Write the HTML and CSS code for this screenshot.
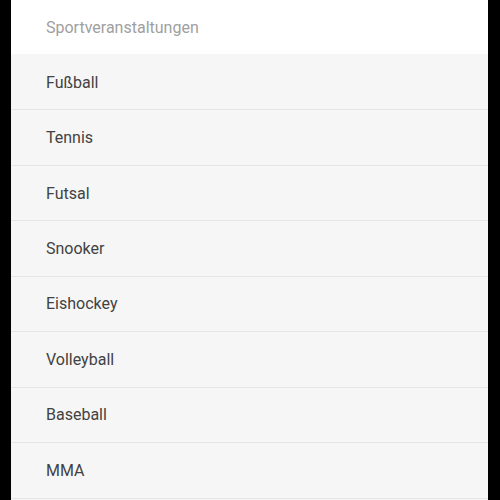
FILE: index.html
```html
<!DOCTYPE html>
<html lang="de">
<head>
    <meta charset="UTF-8">
    <meta name="viewport" content="width=device-width, initial-scale=1.0">
    <title>Sportveranstaltungen</title>
    <link rel="stylesheet" href="styles.css">
</head>
<body>

    <!-- Liste der Sportarten -->
    <div class="panel">
        <div class="panel-title">Sportveranstaltungen</div>
        <ul class="sport-list">
            <li>Fußball</li>
            <li>Tennis</li>
            <li>Futsal</li>
            <li>Snooker</li>
            <li>Eishockey</li>
            <li>Volleyball</li>
            <li>Baseball</li>
            <li>MMA</li>
        </ul>
    </div>

</body>
</html>
```

FILE: styles.css
```css
body, html {
    margin: 0;
    padding: 0;
    height: 100%;
    background-color: #000;
    font-family: Roboto, "Liberation Sans", sans-serif;
    overflow: hidden;
}

.panel {
    margin: 0 12px 0 11px;
    height: 100%;
    background-color: #f6f6f6;
}

.panel-title {
    height: 54px;
    display: flex;
    align-items: center;
    padding-left: 35px;
    background-color: #fff;
    color: #a0a0a0;
    font-size: 16px;
}

.sport-list {
    list-style: none;
    margin: 0;
    padding: 1px 0 0;
}

.sport-list li {
    height: 54.45px;
    display: flex;
    align-items: center;
    padding-left: 35px;
    border-bottom: 1px solid #e5e5e5;
    color: #424242;
    font-size: 16px;
}
```
